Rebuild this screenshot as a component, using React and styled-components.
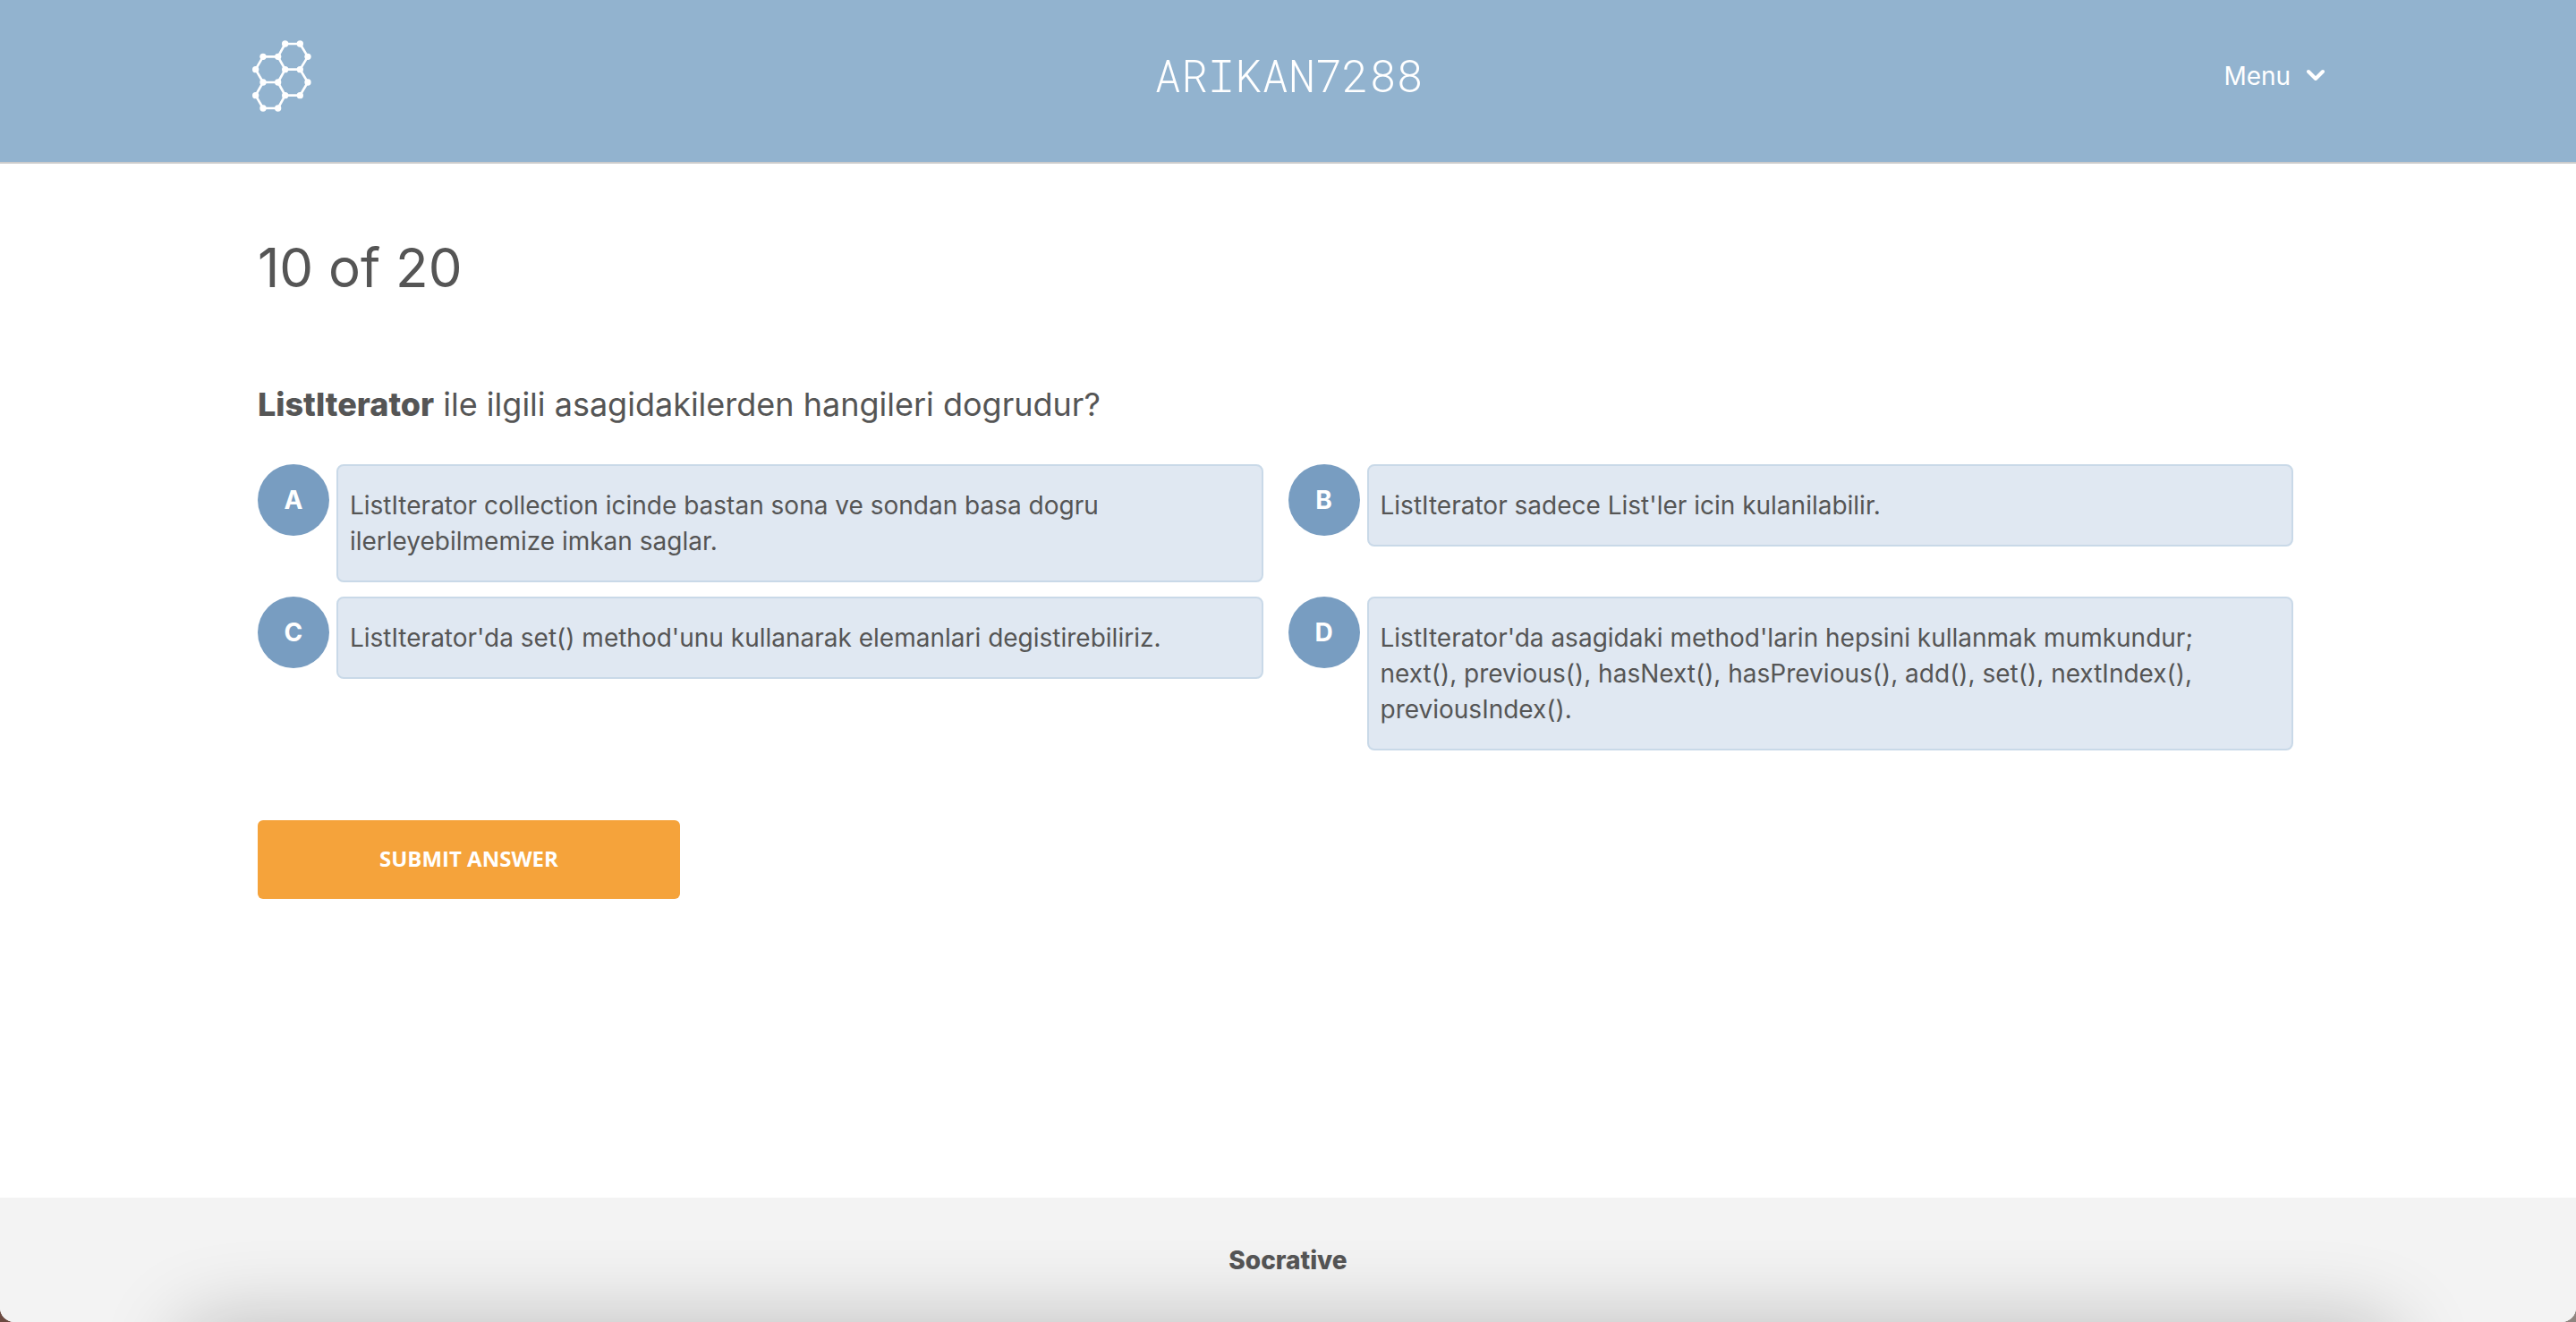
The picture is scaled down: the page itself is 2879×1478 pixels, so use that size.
import React, { useState } from "react";
import styled, { createGlobalStyle } from "styled-components";

const GlobalStyle = createGlobalStyle`
  *, *::before, *::after { box-sizing: border-box; }
  body {
    margin: 0;
    background: linear-gradient(90deg, #6b4a41, #8f8580);
    color: #555555;
    font-family: Inter, "Liberation Sans", sans-serif;
  }
  button { font: inherit; color: inherit; border: 0; padding: 0; cursor: pointer; }
`;

const Page = styled.div`
  min-height: 100vh;
  display: flex;
  flex-direction: column;
  overflow: hidden;
  background: #ffffff;
  border-radius: 0 0 16px 16px;
`;

const Header = styled.header`
  display: grid;
  grid-template-columns: 1fr auto 1fr;
  align-items: center;
  padding: 45px calc(10% - 7px) 56px calc(10% - 6px);
  background: #92b3cf;
  border-bottom: 2px solid #cccccc;
  color: #ffffff;
`;

const Logo = styled.svg`
  display: block;
  width: 66px;
  height: 80px;
`;

const RoomName = styled.div`
  font-family: "Roboto Mono", "Liberation Mono", monospace;
  font-size: 50px;
  font-weight: 350;
  line-height: 78px;
  padding-bottom: 2px;
`;

const MenuButton = styled.button`
  justify-self: end;
  display: flex;
  align-items: center;
  gap: 18px;
  background: none;
  font-size: 28px;
  line-height: 40px;
`;

const Chevron = styled.svg`
  display: block;
  width: 20px;
  height: 16px;
`;

const Main = styled.main`
  flex: 1;
  padding: 76px 10% 80px;
`;

const Progress = styled.h1`
  margin: 0 0 89px;
  font-size: 60px;
  font-weight: 400;
  line-height: 80px;
`;

const Question = styled.p`
  margin: 0 0 43px;
  font-size: 36px;
  line-height: 48px;

  strong { font-weight: 800; }
`;

const Answers = styled.div`
  display: grid;
  grid-template-columns: 1fr 1fr;
  gap: 16px 0;
  align-items: start;
`;

const Answer = styled.button`
  display: flex;
  align-items: flex-start;
  gap: 8px;
  padding-right: 28px;
  background: none;
  text-align: left;
`;

const Letter = styled.span`
  flex: none;
  width: 80px;
  border-radius: 50%;
  background: ${(p) => (p.$selected ? "#f5a33b" : "#789dc1")};
  color: #ffffff;
  font-size: 28px;
  font-weight: 700;
  line-height: 80px;
  text-align: center;
`;

const AnswerText = styled.span`
  flex: 1;
  padding: 24px 13px;
  border: 2px solid #c9d9e8;
  border-radius: 8px;
  background: #e0e8f2;
  font-size: 28px;
  line-height: 40px;
  white-space: pre-line;
`;

const Submit = styled.button`
  display: block;
  width: 472px;
  margin-top: 78px;
  padding-bottom: 2px;
  border-radius: 6px;
  background: #f5a33b;
  color: #ffffff;
  font-family: "Open Sans", "Noto Sans", sans-serif;
  font-size: 24px;
  font-weight: 700;
  line-height: 86px;
  text-transform: uppercase;
`;

const Footer = styled.footer`
  position: relative;
  padding: 50px 0 49px;
  background: #f3f3f3;
  font-size: 28px;
  font-weight: 800;
  line-height: 40px;
  text-align: center;

  &::after {
    content: "";
    position: absolute;
    top: 100%;
    left: 200px;
    right: 200px;
    height: 100px;
    border-radius: 40px;
    box-shadow: 0 0 90px rgba(0, 0, 0, 0.23);
  }
`;

const NODES = [
  [176, 87], [226, 87], [102, 130], [152, 130], [252, 130], [77, 173],
  [176, 173], [226, 173], [102, 216], [152, 216], [252, 216], [77, 260],
  [176, 260], [226, 260], [102, 303], [152, 303],
];

const BONDS =
  "M176 87H226L252 130L226 173H176L152 130ZM152 130H102L77 173L102 216H152L176 173M226 173L252 216L226 260H176L152 216M102 216L77 260L102 303H152L176 260";

const ANSWERS = [
  ["A", "ListIterator collection icinde bastan sona ve sondan basa dogru ilerleyebilmemize imkan saglar."],
  ["B", "ListIterator sadece List'ler icin kulanilabilir."],
  ["C", "ListIterator'da set() method'unu kullanarak elemanlari degistirebiliriz."],
  ["D", "ListIterator'da asagidaki method'larin hepsini kullanmak mumkundur;\nnext(), previous(), hasNext(), hasPrevious(), add(), set(), nextIndex(), previousIndex()."],
];

export default function App() {
  const [selected, setSelected] = useState([]);
  const toggle = (letter) =>
    setSelected((list) =>
      list.includes(letter) ? list.filter((l) => l !== letter) : [...list, letter]
    );

  return (
    <>
      <GlobalStyle />
      <Page>
        <Header>
          <Logo viewBox="66 75 198 240" role="img" aria-label="Socrative">
            <path d={BONDS} fill="none" stroke="#ffffff" strokeWidth="8" strokeLinejoin="round" />
            {NODES.map(([x, y]) => (
              <circle key={`${x}-${y}`} cx={x} cy={y} r="11" fill="#ffffff" />
            ))}
          </Logo>
          <RoomName>ARIKAN7288</RoomName>
          <MenuButton type="button">
            Menu
            <Chevron viewBox="0 0 20 16" aria-hidden="true">
              <path d="M2 3L10 11L18 3" fill="none" stroke="#ffffff" strokeWidth="4" strokeLinecap="round" strokeLinejoin="round" />
            </Chevron>
          </MenuButton>
        </Header>
        <Main>
          <Progress>10 of 20</Progress>
          <Question>
            <strong>ListIterator</strong> ile ilgili asagidakilerden hangileri dogrudur?
          </Question>
          <Answers>
            {ANSWERS.map(([letter, text]) => (
              <Answer
                key={letter}
                type="button"
                aria-pressed={selected.includes(letter)}
                onClick={() => toggle(letter)}
              >
                <Letter $selected={selected.includes(letter)}>{letter}</Letter>
                <AnswerText>{text}</AnswerText>
              </Answer>
            ))}
          </Answers>
          <Submit type="button">Submit Answer</Submit>
        </Main>
        <Footer>Socrative</Footer>
      </Page>
    </>
  );
}
